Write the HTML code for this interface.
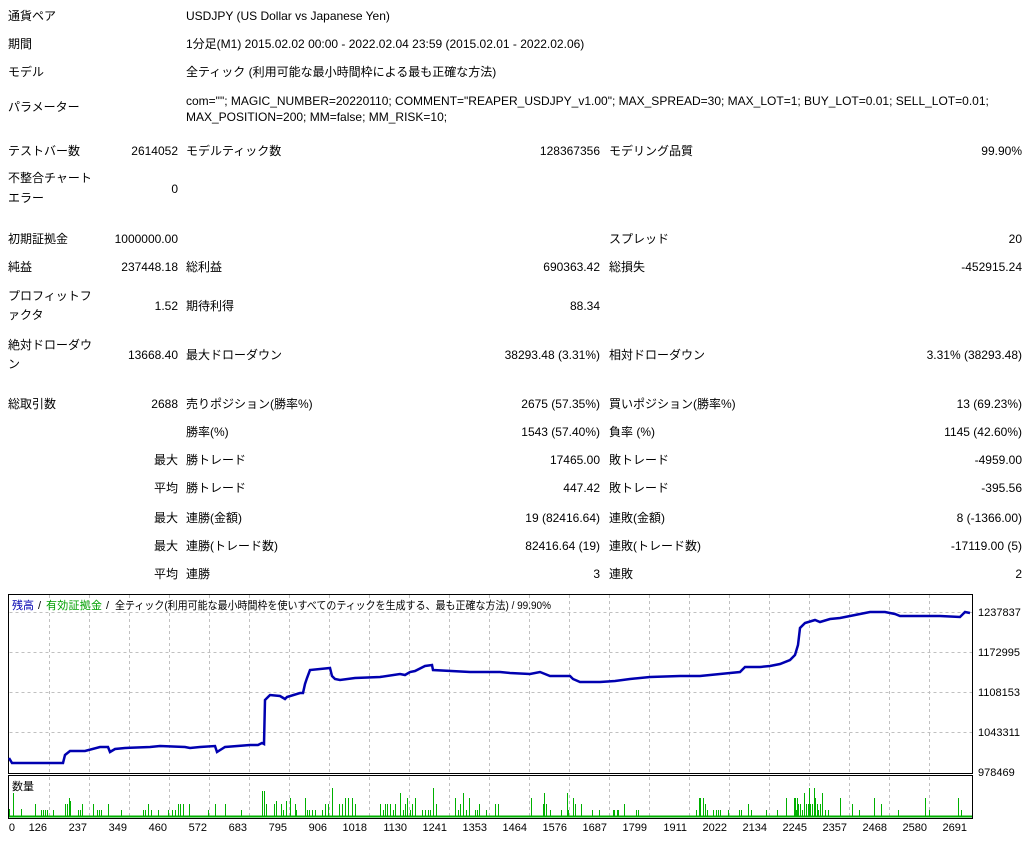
<!DOCTYPE html>
<html><head><meta charset="utf-8"><style>
html,body{margin:0;padding:0;background:#fff;}
body{width:1029px;height:842px;position:relative;overflow:hidden;font-family:"Liberation Sans","Noto Sans CJK JP",sans-serif;font-size:12px;color:#000;}
.t{position:absolute;line-height:16px;white-space:nowrap;}
.a{right:851px;text-align:right}
.b{right:429px;text-align:right}
.c{right:7px;text-align:right}
svg text{font-family:"Liberation Sans","Noto Sans CJK JP",sans-serif;font-size:11px;}
</style></head><body>
<div class="t" style="left:8px;top:8px">通貨ペア</div>
<div class="t" style="left:186px;top:8px">USDJPY (US Dollar vs Japanese Yen)</div>
<div class="t" style="left:8px;top:36px">期間</div>
<div class="t" style="left:186px;top:36px">1分足(M1) 2015.02.02 00:00 - 2022.02.04 23:59 (2015.02.01 - 2022.02.06)</div>
<div class="t" style="left:8px;top:64px">モデル</div>
<div class="t" style="left:186px;top:64px">全ティック (利用可能な最小時間枠による最も正確な方法)</div>
<div class="t" style="left:8px;top:99px">パラメーター</div>
<div class="t" style="left:186px;top:93px">com=""; MAGIC_NUMBER=20220110; COMMENT="REAPER_USDJPY_v1.00"; MAX_SPREAD=30; MAX_LOT=1; BUY_LOT=0.01; SELL_LOT=0.01;</div>
<div class="t" style="left:186px;top:109px">MAX_POSITION=200; MM=false; MM_RISK=10;</div>

<div class="t" style="left:8px;top:143px">テストバー数</div>
<div class="t a" style="top:143px">2614052</div>
<div class="t" style="left:186px;top:143px">モデルティック数</div>
<div class="t b" style="top:143px">128367356</div>
<div class="t" style="left:609px;top:143px">モデリング品質</div>
<div class="t c" style="top:143px">99.90%</div>

<div class="t" style="left:8px;top:170px">不整合チャート</div>
<div class="t" style="left:8px;top:190px">エラー</div>
<div class="t a" style="top:181px">0</div>

<div class="t" style="left:8px;top:231px">初期証拠金</div>
<div class="t a" style="top:231px">1000000.00</div>
<div class="t" style="left:609px;top:231px">スプレッド</div>
<div class="t c" style="top:231px">20</div>

<div class="t" style="left:8px;top:259px">純益</div>
<div class="t a" style="top:259px">237448.18</div>
<div class="t" style="left:186px;top:259px">総利益</div>
<div class="t b" style="top:259px">690363.42</div>
<div class="t" style="left:609px;top:259px">総損失</div>
<div class="t c" style="top:259px">-452915.24</div>

<div class="t" style="left:8px;top:288px">プロフィットフ</div>
<div class="t" style="left:8px;top:307px">ァクタ</div>
<div class="t a" style="top:298px">1.52</div>
<div class="t" style="left:186px;top:298px">期待利得</div>
<div class="t b" style="top:298px">88.34</div>

<div class="t" style="left:8px;top:337px">絶対ドローダウ</div>
<div class="t" style="left:8px;top:356px">ン</div>
<div class="t a" style="top:347px">13668.40</div>
<div class="t" style="left:186px;top:347px">最大ドローダウン</div>
<div class="t b" style="top:347px">38293.48 (3.31%)</div>
<div class="t" style="left:609px;top:347px">相対ドローダウン</div>
<div class="t c" style="top:347px">3.31% (38293.48)</div>

<div class="t" style="left:8px;top:396px">総取引数</div>
<div class="t a" style="top:396px">2688</div>
<div class="t" style="left:186px;top:396px">売りポジション(勝率%)</div>
<div class="t b" style="top:396px">2675 (57.35%)</div>
<div class="t" style="left:609px;top:396px">買いポジション(勝率%)</div>
<div class="t c" style="top:396px">13 (69.23%)</div>

<div class="t" style="left:186px;top:424px">勝率(%)</div>
<div class="t b" style="top:424px">1543 (57.40%)</div>
<div class="t" style="left:609px;top:424px">負率 (%)</div>
<div class="t c" style="top:424px">1145 (42.60%)</div>

<div class="t a" style="top:452px">最大</div>
<div class="t" style="left:186px;top:452px">勝トレード</div>
<div class="t b" style="top:452px">17465.00</div>
<div class="t" style="left:609px;top:452px">敗トレード</div>
<div class="t c" style="top:452px">-4959.00</div>

<div class="t a" style="top:480px">平均</div>
<div class="t" style="left:186px;top:480px">勝トレード</div>
<div class="t b" style="top:480px">447.42</div>
<div class="t" style="left:609px;top:480px">敗トレード</div>
<div class="t c" style="top:480px">-395.56</div>

<div class="t a" style="top:510px">最大</div>
<div class="t" style="left:186px;top:510px">連勝(金額)</div>
<div class="t b" style="top:510px">19 (82416.64)</div>
<div class="t" style="left:609px;top:510px">連敗(金額)</div>
<div class="t c" style="top:510px">8 (-1366.00)</div>

<div class="t a" style="top:538px">最大</div>
<div class="t" style="left:186px;top:538px">連勝(トレード数)</div>
<div class="t b" style="top:538px">82416.64 (19)</div>
<div class="t" style="left:609px;top:538px">連敗(トレード数)</div>
<div class="t c" style="top:538px">-17119.00 (5)</div>

<div class="t a" style="top:566px">平均</div>
<div class="t" style="left:186px;top:566px">連勝</div>
<div class="t b" style="top:566px">3</div>
<div class="t" style="left:609px;top:566px">連敗</div>
<div class="t c" style="top:566px">2</div>

<svg style="position:absolute;left:0;top:0" width="1029" height="842">
<g stroke="#c0c0c0" stroke-dasharray="3,3" stroke-width="1">
<path d="M9.5 612.5H972M9.5 652.5H972M9.5 692.5H972M9.5 732.5H972"/>
<path d="M49.5 595V772M89.5 595V772M129.5 595V772M169.5 595V772M209.5 595V772M249.5 595V772M289.5 595V772M329.5 595V772M369.5 595V772M409.5 595V772M449.5 595V772M489.5 595V772M529.5 595V772M569.5 595V772M609.5 595V772M649.5 595V772M689.5 595V772M729.5 595V772M769.5 595V772M809.5 595V772M849.5 595V772M889.5 595V772M929.5 595V772"/>
<path d="M49.5 777V816M89.5 777V816M129.5 777V816M169.5 777V816M209.5 777V816M249.5 777V816M289.5 777V816M329.5 777V816M369.5 777V816M409.5 777V816M449.5 777V816M489.5 777V816M529.5 777V816M569.5 777V816M609.5 777V816M649.5 777V816M689.5 777V816M729.5 777V816M769.5 777V816M809.5 777V816M849.5 777V816M889.5 777V816M929.5 777V816"/>
</g>
<rect x="8.5" y="594.5" width="964" height="179" fill="none" stroke="#000"/>
<rect x="8.5" y="775.5" width="964" height="43" fill="none" stroke="#000"/>
<path d="M9 816.5H972" stroke="#00b000" stroke-width="2"/>
<path stroke="#00b000" stroke-width="1" fill="none" d="M13.5 816v-23M9.5 816v-7M21.5 816v-7M35.5 816v-12M41.5 816v-6M43.5 816v-6M45.5 816v-6M47.5 816v-6M53.5 816v-6M65.5 816v-12M67.5 816v-12M69.5 816v-18M70.5 816v-15M78.5 816v-6M80.5 816v-6M82.5 816v-12M93.5 816v-12M97.5 816v-6M99.5 816v-6M101.5 816v-6M108.5 816v-12M121.5 816v-6M143.5 816v-6M145.5 816v-6M148.5 816v-12M151.5 816v-6M158.5 816v-6M168.5 816v-6M172.5 816v-6M175.5 816v-6M178.5 816v-12M180.5 816v-12M183.5 816v-12M189.5 816v-12M208.5 816v-6M215.5 816v-12M225.5 816v-12M241.5 816v-6M262.5 816v-25M264.5 816v-25M266.5 816v-12M274.5 816v-12M276.5 816v-15M281.5 816v-12M283.5 816v-6M286.5 816v-15M290.5 816v-18M295.5 816v-12M296.5 816v-6M305.5 816v-18M307.5 816v-6M309.5 816v-6M312.5 816v-6M315.5 816v-6M322.5 816v-6M325.5 816v-12M328.5 816v-12M332.5 816v-28M339.5 816v-12M342.5 816v-12M345.5 816v-18M348.5 816v-18M352.5 816v-18M355.5 816v-12M380.5 816v-12M383.5 816v-6M385.5 816v-12M387.5 816v-12M390.5 816v-12M393.5 816v-6M395.5 816v-12M400.5 816v-23M403.5 816v-6M405.5 816v-12M407.5 816v-18M410.5 816v-6M412.5 816v-12M415.5 816v-18M422.5 816v-6M425.5 816v-6M428.5 816v-6M430.5 816v-6M433.5 816v-28M436.5 816v-12M455.5 816v-18M458.5 816v-6M460.5 816v-12M463.5 816v-23M466.5 816v-6M469.5 816v-18M475.5 816v-6M477.5 816v-6M479.5 816v-12M486.5 816v-6M495.5 816v-12M498.5 816v-12M531.5 816v-18M543.5 816v-12M544.5 816v-23M546.5 816v-12M550.5 816v-6M561.5 816v-6M567.5 816v-23M568.5 816v-6M573.5 816v-18M575.5 816v-12M581.5 816v-12M592.5 816v-6M599.5 816v-6M613.5 816v-6M614.5 816v-6M617.5 816v-6M618.5 816v-6M624.5 816v-12M636.5 816v-6M638.5 816v-6M696.5 816v-6M699.5 816v-18M700.5 816v-18M703.5 816v-18M705.5 816v-12M707.5 816v-6M713.5 816v-6M716.5 816v-6M718.5 816v-6M720.5 816v-6M728.5 816v-6M739.5 816v-6M741.5 816v-6M748.5 816v-12M751.5 816v-6M766.5 816v-6M777.5 816v-6M786.5 816v-18M794.5 816v-18M795.5 816v-18M796.5 816v-6M797.5 816v-18M798.5 816v-12M800.5 816v-12M802.5 816v-6M804.5 816v-23M806.5 816v-12M808.5 816v-12M809.5 816v-28M810.5 816v-12M812.5 816v-12M814.5 816v-28M815.5 816v-18M817.5 816v-12M818.5 816v-6M820.5 816v-12M822.5 816v-23M825.5 816v-6M828.5 816v-6M840.5 816v-18M852.5 816v-12M859.5 816v-6M874.5 816v-18M881.5 816v-12M898.5 816v-6M925.5 816v-18M929.5 816v-6M958.5 816v-18M961.5 816v-6"/>
<polyline fill="none" stroke="#0000b0" stroke-width="2.5" points="9,758 12,763 50,763 63,763 65,755 70,751 85,751 100,747 108,747 110,752 115,749 125,748 150,747 160,746 185,747 190,748 200,747 215,746 217,752 225,747 250,745 258,745 262,743 264,744 265,700 268,697 270,695 280,696 285,699 287,697 300,693 303,693 305,684 307,678 310,670 330,668 332,676 335,679 340,680 355,678 380,677 400,674 405,675 410,672 415,671 425,666 432,665 433,670 470,672 500,672 510,673 530,674 540,672 545,674 550,676 570,676 573,679 580,682 600,682 615,681 630,679 650,677 680,676 700,676 710,675 720,674 730,673 740,672 745,667 760,667 770,666 780,664 790,660 795,655 798,645 800,628 805,623 815,620 820,622 830,619 840,618 850,616 860,614 870,612 885,612 890,613 895,614 900,616 940,616 960,617 965,612 970,613"/>
<text x="12" y="609" fill="#0000b0" textLength="22">残高</text>
<text x="38" y="609">/</text>
<text x="46" y="609" fill="#00a000" textLength="56">有効証拠金</text>
<text x="106" y="609">/</text>
<text x="115" y="609" textLength="436" lengthAdjust="spacingAndGlyphs">全ティック(利用可能な最小時間枠を使いすべてのティックを生成する、最も正確な方法) / 99.90%</text>
<text x="12" y="790">数量</text>
<g>
<text x="978" y="616">1237837</text>
<text x="978" y="656">1172995</text>
<text x="978" y="696">1108153</text>
<text x="978" y="736">1043311</text>
<text x="978" y="776">978469</text>
</g>
<g text-anchor="end">
<text x="15" y="831">0</text><text x="47" y="831">126</text><text x="87" y="831">237</text><text x="127" y="831">349</text><text x="167" y="831">460</text><text x="207" y="831">572</text><text x="247" y="831">683</text><text x="287" y="831">795</text><text x="327" y="831">906</text><text x="367" y="831">1018</text><text x="407" y="831">1130</text><text x="447" y="831">1241</text><text x="487" y="831">1353</text><text x="527" y="831">1464</text><text x="567" y="831">1576</text><text x="607" y="831">1687</text><text x="647" y="831">1799</text><text x="687" y="831">1911</text><text x="727" y="831">2022</text><text x="767" y="831">2134</text><text x="807" y="831">2245</text><text x="847" y="831">2357</text><text x="887" y="831">2468</text><text x="927" y="831">2580</text><text x="967" y="831">2691</text>
</g>
</svg>
</body></html>
